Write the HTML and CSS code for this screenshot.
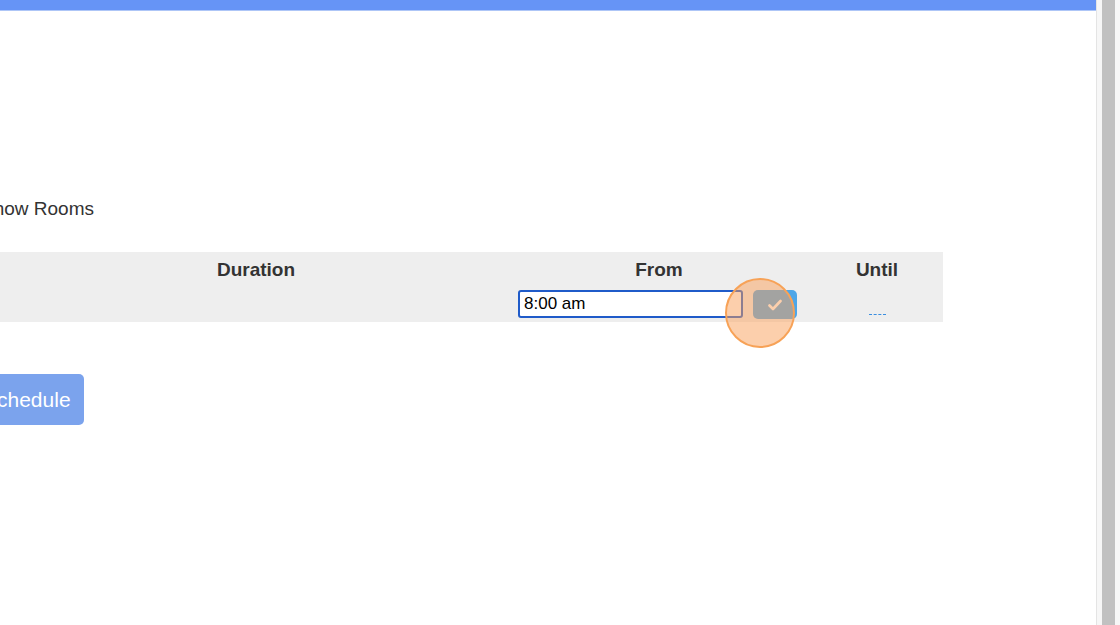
FILE: index.html
```html
<!DOCTYPE html>
<html lang="en">
<head>
    <meta charset="UTF-8">
    <title>Schedule</title>
    <link rel="stylesheet" href="styles.css">
</head>
<body>
    <div class="window">
        <div class="page">
            <div class="top-bar"></div>

            <div class="content">
                <div class="rooms-toggle">Show Rooms</div>

                <div class="slots">
                    <div class="slot-head">Duration</div>
                    <div class="slot-head">From</div>
                    <div class="slot-head until-head">Until</div>

                    <div class="slot-cell"></div>
                    <div class="slot-cell from-cell">
                        <input class="time-input" type="text" value="8:00 am">
                        <button class="ok-btn">
                            <svg width="14" height="12" viewBox="0 0 14 12">
                                <path d="M1.5 6.5 L5 10 L12.5 2" fill="none" stroke="#fff" stroke-width="2.6" stroke-linecap="round" stroke-linejoin="round"/>
                            </svg>
                        </button>
                        <span class="click-mark"></span>
                    </div>
                    <div class="slot-cell until-cell">
                        <span class="empty-link"></span>
                    </div>
                </div>

                <button class="schedule-btn">Schedule</button>
            </div>
        </div>
        <div class="scrollbar">
            <div class="thumb"></div>
        </div>
    </div>
</body>
</html>
```

FILE: styles.css
```css
html, body {
    margin: 0;
    padding: 0;
    height: 100%;
}
body {
    font-family: "Liberation Sans", Arial, sans-serif;
    color: #333;
    background: #fff;
    overflow: hidden;
}
.window {
    display: flex;
    height: 625px;
}
.page {
    flex: 1;
    overflow: hidden;
}
.top-bar {
    height: 10px;
    background-color: #6694f6;
    border-bottom: 1px solid #aec6f7;
}
.content {
    padding-top: 187px;
}
.rooms-toggle {
    font-size: 19px;
    margin-left: -19px;
    line-height: 22px;
}
.slots {
    display: grid;
    grid-template-columns: 512px 294px 137px;
    grid-template-rows: 34px 36px;
    width: 943px;
    margin-top: 32px;
    background-color: #eeeeee;
}
.slot-head {
    font-size: 19px;
    font-weight: bold;
    text-align: center;
    line-height: 36px;
}
.until-head {
    padding-left: 5px;
}
.slot-cell {
    display: flex;
    align-items: flex-start;
}
.from-cell {
    position: relative;
    padding-left: 6px;
    gap: 10px;
    padding-top: 4px;
}
.time-input {
    width: 225px;
    height: 28px;
    box-sizing: border-box;
    border: 2px solid #1f5bc9;
    border-radius: 3px;
    padding: 0 4px;
    font-family: "Liberation Sans", Arial, sans-serif;
    font-size: 17px;
    color: #000;
    background: #fff;
    outline: none;
}
.ok-btn {
    width: 44px;
    height: 29px;
    border: none;
    border-radius: 5px;
    background-color: #4da6e8;
    display: flex;
    align-items: center;
    justify-content: center;
    padding: 0;
}
.click-mark {
    position: absolute;
    left: 213px;
    top: -8px;
    width: 66px;
    height: 66px;
    border-radius: 50%;
    border: 2px solid #f7a257;
    background-color: rgba(250, 160, 90, 0.5);
}
.until-cell {
    justify-content: center;
    padding-left: 5px;
    padding-top: 28px;
}
.empty-link {
    width: 17px;
    border-bottom: 1px dashed #3a8ee0;
}
.schedule-btn {
    display: block;
    margin-top: 52px;
    margin-left: -33px;
    height: 51px;
    padding: 0 13px 0 16px;
    border: none;
    border-radius: 5px;
    background-color: #7ba3ed;
    color: #fff;
    font-family: "Liberation Sans", Arial, sans-serif;
    font-size: 21px;
}
.scrollbar {
    border-left: 1px solid #e4e4e4;
    background-color: #f7f7f7;
    padding: 0 5px;
    width: 13px;
}
.thumb {
    height: 100%;
    background-color: #c1c1c1;
}
```
